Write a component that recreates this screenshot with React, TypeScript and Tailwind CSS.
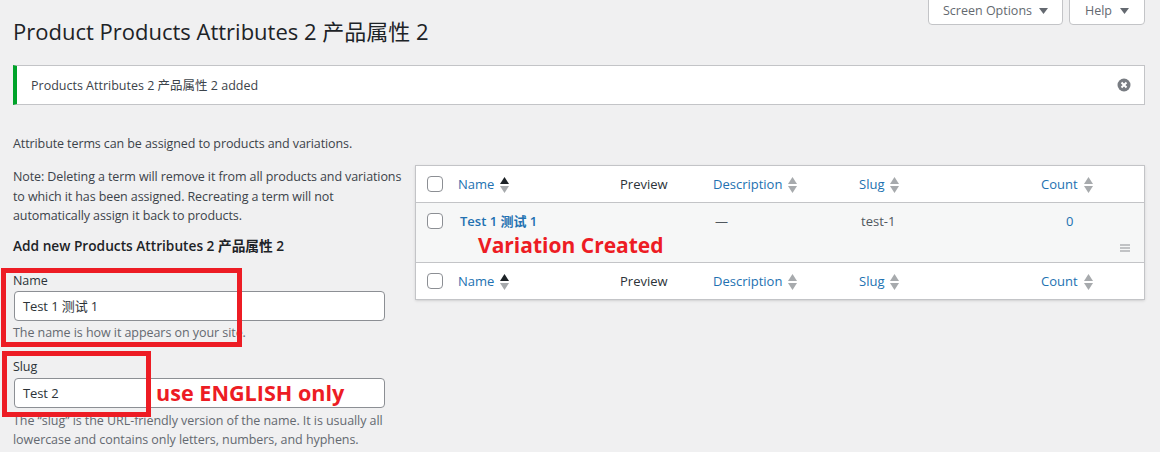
const font = "[font-family:'Open_Sans','Noto_Sans_CJK_SC',sans-serif]";
const cols = 'grid grid-cols-[42px_162px_93px_146px_182px_1fr] items-center';

function SortArrows({ active }: { active?: boolean }) {
  return (
    <svg width="9" height="16" viewBox="0 0 9 16" className="ml-[6px] -mt-[1px]">
      <path d="M4.500 0L9 7H0z" fill={active ? '#1d2327' : '#a7aaad'} />
      <path d="M4.500 16L9 9H0z" fill="#a7aaad" />
    </svg>
  );
}

function Checkbox() {
  return <span className="block h-4 w-4 rounded-[4px] border border-[#8c8f94] bg-white" />;
}

function HeaderRow({ border }: { border: string }) {
  const link = 'flex items-center text-[#2271b1]';
  return (
    <div className={`${cols} h-[37px] bg-white pt-[2px] ${border} border-[#c3c4c7] text-[13px]`}>
      <div className="-mt-[2px] pl-[11px]"><Checkbox /></div>
      <div className={link}>Name<SortArrows active /></div>
      <div className="text-[#2c3338]">Preview</div>
      <div className={link}>Description<SortArrows /></div>
      <div className={link}>Slug<SortArrows /></div>
      <div className={link}>Count<SortArrows /></div>
    </div>
  );
}

function TermsTable() {
  return (
    <div className="-mt-[1px] ml-[12px] flex-1 border border-[#c3c4c7] bg-white shadow-sm">
      <HeaderRow border="border-b" />
      <div className={`${cols} relative h-[59px] items-start bg-[#f6f7f7] pt-[9px] text-[13px] text-[#50575e]`}>
        <div className="pl-[11px] pt-[1px]"><Checkbox /></div>
        <div className="pl-[2px] font-semibold text-[#2271b1]">Test 1 测试 1</div>
        <div />
        <div className="pl-[2px]">—</div>
        <div className="pl-[2px]">test-1</div>
        <div className="pl-[25px] text-[#2271b1]">0</div>
        <svg width="10" height="8" viewBox="0 0 10 8" className="absolute bottom-[10px] right-[14px]">
          <path d="M0 1h10M0 4h10M0 7h10" stroke="#8c8f94" strokeWidth="1.2" />
        </svg>
        <span className="absolute left-[62px] top-[28px] text-[21px] font-bold leading-[28px] text-[#ed1c24]">Variation Created</span>
      </div>
      <HeaderRow border="border-t" />
    </div>
  );
}

function AddForm() {
  const input = 'ml-[1px] h-[30px] w-[371px] rounded-[4px] border border-[#8c8f94] bg-white px-2 text-[13px] leading-[28px] text-[#2c3338]';
  const help = 'text-[12.5px] tracking-[-0.06px] text-[#646970]';
  return (
    <div className="relative w-[390px] text-[12.5px] leading-[19.5px] tracking-[-0.1px] text-[#3c434a]">
      <p className="mt-[1px]">Note: Deleting a term will remove it from all products and variations to which it has been assigned. Recreating a term will not automatically assign it back to products.</p>
      <h2 className="mt-[10px] text-[13.7px] font-semibold leading-[19px] tracking-normal text-[#1d2327]">Add new Products Attributes 2 产品属性 2</h2>
      <label className="mt-[17.500px] block leading-[18px] text-[#2c3338]">Name</label>
      <div className={`mt-[1px] ${input}`}>Test 1 测试 1</div>
      <p className={`mt-[2px] leading-[20px] ${help}`}>The name is how it appears on your site.</p>
      <label className="mt-[15px] block leading-[18px] text-[#2c3338]">Slug</label>
      <div className={`mt-[2px] ${input}`}>Test 2</div>
      <p className={`mt-[2.500px] leading-[19px] ${help}`}>The “slug” is the URL-friendly version of the name. It is usually all lowercase and contains only letters, numbers, and hyphens.</p>

      {/* red annotation boxes pasted on top of the form */}
      <div className="absolute left-[-12px] top-[102px] h-[79px] w-[241px] border-[5px] border-[#ed1c24]" />
      <div className="absolute left-[-11px] top-[185px] h-[66px] w-[149px] border-[5px] border-[#ed1c24]" />
      <span className="absolute left-[143px] top-[212px] text-[21.600px] font-bold leading-[30px] tracking-normal text-[#ed1c24]">use ENGLISH only</span>
    </div>
  );
}

export default function App() {
  return (
    <div className={`${font} relative h-[452px] w-[1160px] overflow-hidden bg-[#f0f0f1] pl-[13px] pr-[15px]`}>
      <div className="flex h-[25px] items-end justify-end gap-[6px]">
        <button className="flex h-[30px] w-[135px] items-center justify-center gap-[7px] rounded-b-[4px] border border-[#c3c4c7] bg-white pt-[2px] text-[12.500px] text-[#646970]">
          Screen Options
          <svg width="9" height="6" viewBox="0 0 9 6"><path d="M0 0h9L4.500 6z" fill="#646970" /></svg>
        </button>
        <button className="flex h-[30px] w-[76px] items-center justify-center gap-[8px] rounded-b-[4px] border border-[#c3c4c7] bg-white pt-[2px] text-[12.500px] text-[#646970]">
          Help
          <svg width="9" height="6" viewBox="0 0 9 6"><path d="M0 0h9L4.500 6z" fill="#646970" /></svg>
        </button>
      </div>
      <h1 className="mt-[-8px] h-[48px] text-[22px] font-normal leading-[29px] text-[#1d2327]">Product Products Attributes 2 产品属性 2</h1>
      <div className="flex h-[40px] items-center justify-between border border-l-[4px] border-[#c3c4c7] border-l-[#00a32a] bg-white pl-[14px] pr-[13px] text-[12.500px] text-[#3c434a]">
        <span className="pt-[2px]">Products Attributes 2 产品属性 2 added</span>
        <svg width="14" height="14" viewBox="0 0 14 14">
          <circle cx="7" cy="7" r="6.500" fill="#787c82" />
          <path d="M4.500 4.500l5 5M9.500 4.500l-5 5" stroke="#fff" strokeWidth="2" />
        </svg>
      </div>
      <p className="mt-[29px] text-[12.500px] leading-[20px] tracking-[-0.1px] text-[#3c434a]">Attribute terms can be assigned to products and variations.</p>
      <div className="mt-[12px] flex items-start">
        <AddForm />
        <TermsTable />
      </div>
    </div>
  );
}
